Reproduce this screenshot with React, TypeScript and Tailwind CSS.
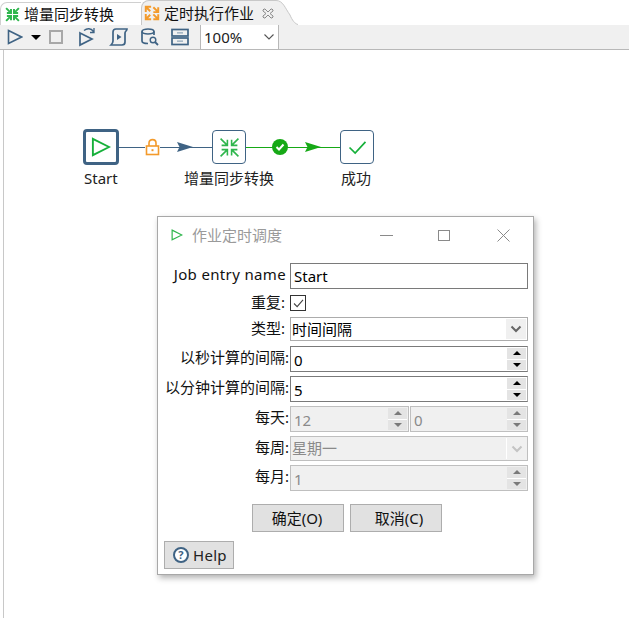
import type { ReactNode } from "react";

const font = { fontFamily: '"Noto Sans", "Noto Sans CJK SC", sans-serif' };

function Play({ className = "", stroke = "#3f6384", w = 1.6 }: { className?: string; stroke?: string; w?: number }) {
  return (
    <svg viewBox="0 0 16 16" className={className} fill="none" stroke={stroke} strokeWidth={w}>
      <path d="M1.5 1.5 L14.5 8 L1.5 14.5 Z" />
    </svg>
  );
}

function MergeIcon({ className = "", w = 1.5 }: { className?: string; w?: number }) {
  return (
    <svg viewBox="0 0 20 20" className={className} fill="none" stroke="#2fb64d" strokeWidth={w}>
      <path d="M1.5 1.5 L7.5 7.5 M2.5 8 H8 V2.5" />
      <path d="M18.5 1.5 L12.5 7.5 M17.5 8 H12 V2.5" />
      <path d="M1.5 18.5 L7.5 12.5 M2.5 12 H8 V17.5" />
      <path d="M18.5 18.5 L12.5 12.5 M17.5 12 H12 V17.5" />
    </svg>
  );
}

function RefreshIcon() {
  return (
    <svg viewBox="0 0 18 18" className="w-4 h-4 shrink-0" fill="none" stroke="#f39a2b" strokeWidth="2.2">
      <path d="M2 8 V2 H8 M2 2 L7 7" />
      <path d="M10.5 8 H16 V2.5 M16 8 L10.5 2.5" />
      <path d="M2 10 V16 H8 M2 16 L7 11" />
      <path d="M10.5 16 H16 V10.5 M16 16 L10.5 10.5" />
    </svg>
  );
}

function ToolIcon({ children }: { children: ReactNode }) {
  return (
    <svg viewBox="0 0 20 20" className="w-5 h-5" fill="none" stroke="#3f6384" strokeWidth="1.7">
      {children}
    </svg>
  );
}

function Arrow({ color }: { color: string }) {
  return (
    <svg viewBox="0 0 16 10" className="w-4 h-[10px]">
      <path d="M0 0 L16 5 L0 10 L2.5 5 Z" fill={color} />
    </svg>
  );
}

function Stepper({ disabled = false }: { disabled?: boolean }) {
  const up = disabled ? "border-b-[#7a7a7a]" : "border-b-black";
  const down = disabled ? "border-t-[#7a7a7a]" : "border-t-black";
  return (
    <div className="w-[19px] shrink-0 flex flex-col gap-px bg-white">
      <div className="flex-1 bg-[#e4e4e4] flex items-center justify-center">
        <div className={`w-0 h-0 border-x-4 border-x-transparent border-b-4 ${up}`} />
      </div>
      <div className="flex-1 bg-[#e4e4e4] flex items-center justify-center">
        <div className={`w-0 h-0 border-x-4 border-x-transparent border-t-4 ${down}`} />
      </div>
    </div>
  );
}

function Spin({ value, disabled = false, className = "w-full" }: { value: string; disabled?: boolean; className?: string }) {
  return (
    <div
      className={`h-[26px] flex border pr-px py-px ${className} ${
        disabled
          ? "border-[#bfbfbf] bg-[#f0f0f0] text-[#8a8a8a]"
          : "border-t-[#7a7a7a] border-l-[#7a7a7a] border-b-[#7a7a7a] border-r-[#acacac] bg-white text-black"
      }`}
    >
      <div className="flex-1 pl-[3px] text-[15px] leading-[24px]">{value}</div>
      <Stepper disabled={disabled} />
    </div>
  );
}

function Row({
  label,
  className = "",
  labelClass = "mb-[4px] leading-[12px]",
  children,
}: {
  label: ReactNode;
  className?: string;
  labelClass?: string;
  children: ReactNode;
}) {
  return (
    <div className={`flex items-center ${className}`}>
      <div className={`w-[125px] shrink-0 mr-px text-right text-[15px] text-[#111] whitespace-nowrap ${labelClass}`}>{label}</div>
      <div className="w-[238px]">{children}</div>
    </div>
  );
}

function Chevron({ color }: { color: string }) {
  return (
    <svg viewBox="0 0 12 8" className="w-3 h-2" fill="none" stroke={color} strokeWidth="2">
      <path d="M1.5 1.5 L6 6 L10.5 1.5" />
    </svg>
  );
}

export default function App() {
  return (
    <div className="relative w-[629px] h-[618px] overflow-hidden bg-white" style={font}>
      {/* tabs */}
      <div className="h-[25px] flex bg-white text-[15px] text-[#111] whitespace-nowrap">
        <div className="w-[141px] shrink-0 mt-[2px] flex items-center pl-[4px] gap-[4px] border-t border-l border-[#d0d0d0] rounded-tl-[7px]">
          <MergeIcon className="w-[15px] h-[15px]" w={2.6} />
          <span>增量同步转换</span>
        </div>
        <div className="w-[135px] shrink-0 flex items-center pl-[2px] gap-[4px] bg-[#f0f0f0] border-t border-l border-[#c8c8c8] rounded-tl-[8px]">
          <RefreshIcon />
          <span>定时执行作业</span>
          <svg viewBox="0 0 12 11" className="ml-[4px] w-3 h-[11px] shrink-0" fill="#f0f0f0" stroke="#8a8a8a" strokeWidth="1">
            <path d="M1 2 L2 1 L3 1 L6 4 L9 1 L10 1 L11 2 L11 3 L8 5.5 L11 8 L11 9 L10 10 L9 10 L6 7 L3 10 L2 10 L1 9 L1 8 L4 5.5 L1 3 Z" />
          </svg>
        </div>
        <svg viewBox="0 0 22 25" className="w-[22px] h-[25px] shrink-0">
          <path d="M0 0.5 C7 0.5 9 8 14 15 C16 20 19 24 22 24.5 L22 25 L0 25 Z" fill="#f0f0f0" />
          <path d="M0 0.5 C7 0.5 9 8 14 15 C16 20 19 24 22 24.5" fill="none" stroke="#c8c8c8" />
        </svg>
      </div>

      {/* toolbar */}
      <div className="h-[25px] flex items-center bg-[#f0f0f0] border-b border-[#b8b8b8]">
        <Play className="w-4 h-4 ml-[7px]" />
        <div className="ml-[8px] w-0 h-0 border-x-[5px] border-x-transparent border-t-[5px] border-t-black" />
        <div className="ml-[8px] w-[14px] h-[14px] border-2 border-[#a8a8a8]" />
        <div className="ml-[15px]">
          <ToolIcon>
            <path d="M2 6 L14 12 L2 18 Z" />
            <path d="M6 3.5 C9 1 13 1 15.5 4.5 M16 1 V5.5 H12" strokeWidth="1.3" />
          </ToolIcon>
        </div>
        <div className="ml-[11px]">
          <ToolIcon>
            <path d="M7 2 H18 C18 4 16 4 16 6 V15 C16 17 15 18 13 18 H2 C3 17 4 16 4 14 V5 C4 3 5 2 7 2 Z" />
            <path d="M8 7 L12.5 10 L8 13 Z" fill="#3f6384" stroke="none" />
          </ToolIcon>
        </div>
        <div className="ml-[11px]">
          <ToolIcon>
            <ellipse cx="8" cy="4.5" rx="6" ry="2.5" />
            <path d="M2 4.5 V14 C2 16 5 16.5 8 16.5 M14 4.5 V8" />
            <circle cx="13" cy="13" r="2.8" strokeWidth="1.4" />
            <path d="M15 15 L18 18" strokeWidth="1.8" />
          </ToolIcon>
        </div>
        <div className="ml-[10px]">
          <ToolIcon>
            <rect x="2" y="2.5" width="16" height="6.5" />
            <rect x="2" y="11" width="16" height="6.5" />
            <path d="M7 5.8 H13 M7 14.2 H13" strokeWidth="1.2" stroke="#8fa5b8" />
          </ToolIcon>
        </div>
        <div className="ml-[10px] w-[79px] h-[24px] flex items-center justify-between pl-[3px] pr-[4px] bg-white border-x border-[#b8b8b8]">
          <span className="text-[15px] text-[#222]">100%</span>
          <svg viewBox="0 0 10 6" className="w-[10px] h-[6px]" fill="none" stroke="#555" strokeWidth="1.1">
            <path d="M0.5 0.5 L5 5 L9.5 0.5" />
          </svg>
        </div>
      </div>

      {/* canvas: left rule */}
      <div className="absolute left-[3px] top-[50px] bottom-0 w-px bg-[#c8c8c8]" />

      {/* hops */}
      <div className="absolute left-[118px] top-[147px] w-[95px] h-px bg-[#3f6384]" />
      <div className="absolute left-[246px] top-[147px] w-[95px] h-px bg-[#16a916]" />
      <div className="absolute left-[177px] top-[142px]"><Arrow color="#3f6384" /></div>
      <div className="absolute left-[305px] top-[142px]"><Arrow color="#16a916" /></div>
      <div className="absolute left-[145px] top-[138px] bg-white">
        <svg viewBox="0 0 15 18" className="w-[15px] h-[18px]" fill="none" stroke="#f39a2b" strokeWidth="1.6">
          <path d="M4 8 V5 C4 0.5 11 0.5 11 5 V8" />
          <rect x="1.5" y="8" width="12" height="8.5" />
          <rect x="6.5" y="11.2" width="2" height="2" fill="#f39a2b" stroke="none" />
        </svg>
      </div>
      <div className="absolute left-[272px] top-[139px] w-4 h-4 rounded-full bg-[#16a916] flex items-center justify-center">
        <svg viewBox="0 0 10 10" className="w-[10px] h-[10px]" fill="none" stroke="#fff" strokeWidth="2">
          <path d="M1.5 5 L4 7.5 L8.5 2.5" />
        </svg>
      </div>

      {/* nodes */}
      <div className="absolute left-[83px] top-[129px] w-[36px] h-[36px] rounded-[4px] border-[3px] border-[#3f6384] bg-white flex items-center justify-center">
        <Play className="w-[20px] h-[20px]" stroke="#16b03a" w={1.5} />
      </div>
      <div className="absolute left-[84px] top-[168px] text-[15px] leading-[20px] text-[#222]">Start</div>
      <div className="absolute left-[212px] top-[130px] w-[34px] h-[34px] rounded-[4px] border border-[#3f6384] bg-white flex items-center justify-center">
        <MergeIcon className="w-[21px] h-[21px]" />
      </div>
      <div className="absolute left-[184px] top-[168px] text-[15px] leading-[20px] text-[#222] whitespace-nowrap">增量同步转换</div>
      <div className="absolute left-[340px] top-[130px] w-[34px] h-[34px] rounded-[4px] border border-[#3f6384] bg-white flex items-center justify-center">
        <svg viewBox="0 0 20 16" className="w-[19px] h-[15px]" fill="none" stroke="#16b03a" strokeWidth="1.8">
          <path d="M1.5 8 L7.5 14 L18.5 2" />
        </svg>
      </div>
      <div className="absolute left-[341px] top-[168px] text-[15px] leading-[20px] text-[#222] whitespace-nowrap">成功</div>

      {/* dialog window */}
      <div className="absolute left-[157px] top-[216px] w-[377px] h-[359px] bg-white border border-[#a8a8a8] shadow-[2px_3px_6px_rgba(0,0,0,0.3)]">
        <div className="h-[36px] flex items-center pl-[13px]">
          <Play className="w-[12px] h-[12px]" stroke="#2fb64d" w={1.6} />
          <span className="ml-[9px] text-[15px] text-[#9a9a9a]">作业定时调度</span>
          <div className="ml-[98px] w-[13px] h-px bg-[#8a8a8a]" />
          <div className="ml-[45px] w-[12px] h-[11px] border border-[#8a8a8a]" />
          <svg viewBox="0 0 13 13" className="ml-[47px] w-[13px] h-[13px]" fill="none" stroke="#8a8a8a" strokeWidth="1">
            <path d="M0.5 0.5 L12.5 12.5 M12.5 0.5 L0.5 12.5" />
          </svg>
        </div>

        <div className="pl-[6px] pt-[10px] flex flex-col">
          <Row label={<span className="tracking-[0.35px]">Job entry name</span>} labelClass="mb-[4px] leading-[12px] pr-[3px]">
            <div className="h-[26px] border border-[#7a7a7a] pl-[3px] text-[15px] leading-[24px] text-black">Start</div>
          </Row>
          <Row label="重复:" className="mt-[6px]" labelClass="mb-[2px] leading-[14px] pr-[4px]">
            <div className="w-4 h-4 border border-[#333] flex items-center justify-center">
              <svg viewBox="0 0 12 10" className="w-[11px] h-[9px]" fill="none" stroke="#444" strokeWidth="1.2">
                <path d="M1 5 L4.5 8.5 L11 1" />
              </svg>
            </div>
          </Row>
          <Row label="类型:" className="mt-[6px]" labelClass="mb-[2px] leading-[14px] pr-[4px]">
            <div className="h-[24px] flex border border-[#acacac] p-px">
              <div className="flex-1 text-[15px] leading-[21px] text-black">时间间隔</div>
              <div className="w-[20px] bg-[#f0f0f0] flex items-center justify-center">
                <Chevron color="#666" />
              </div>
            </div>
          </Row>
          <Row label="以秒计算的间隔:" className="mt-[5px]">
            <Spin value="0" />
          </Row>
          <Row label="以分钟计算的间隔:" className="mt-[4px]">
            <Spin value="5" />
          </Row>
          <Row label="每天:" className="mt-[4px]">
            <div className="flex gap-px">
              <Spin value="12" disabled className="w-[119px]" />
              <Spin value="0" disabled className="w-[118px]" />
            </div>
          </Row>
          <Row label="每周:" className="mt-[4px]">
            <div className="h-[25px] flex border border-[#bfbfbf] bg-[#f0f0f0] p-px">
              <div className="flex-1 text-[15px] leading-[21px] text-[#8a8a8a]">星期一</div>
              <div className="w-[20px] border-l border-white flex items-center justify-center">
                <Chevron color="#c4c4c4" />
              </div>
            </div>
          </Row>
          <Row label="每月:" className="mt-[4px]">
            <Spin value="1" disabled />
          </Row>

          <div className="mt-[13px] ml-[88px] flex gap-[6px]">
            <button className="w-[92px] h-[28px] pr-[2px] bg-[#e1e1e1] border border-[#adadad] text-[15px] text-[#111]">确定(O)</button>
            <button className="w-[92px] h-[28px] pl-[6px] bg-[#e1e1e1] border border-[#adadad] text-[15px] text-[#111]">取消(C)</button>
          </div>
          <button className="mt-[9px] w-[70px] h-[28px] bg-[#e1e1e1] border border-[#adadad] flex items-center pl-[8px] gap-[4px] text-[15px] tracking-[0.3px] text-[#222]">
            <span className="w-4 h-4 rounded-full border-2 border-[#3f6384] bg-white text-[#3f6384] text-[11px] leading-[12px] font-bold text-center shrink-0">?</span>
            Help
          </button>
        </div>
      </div>
    </div>
  );
}
